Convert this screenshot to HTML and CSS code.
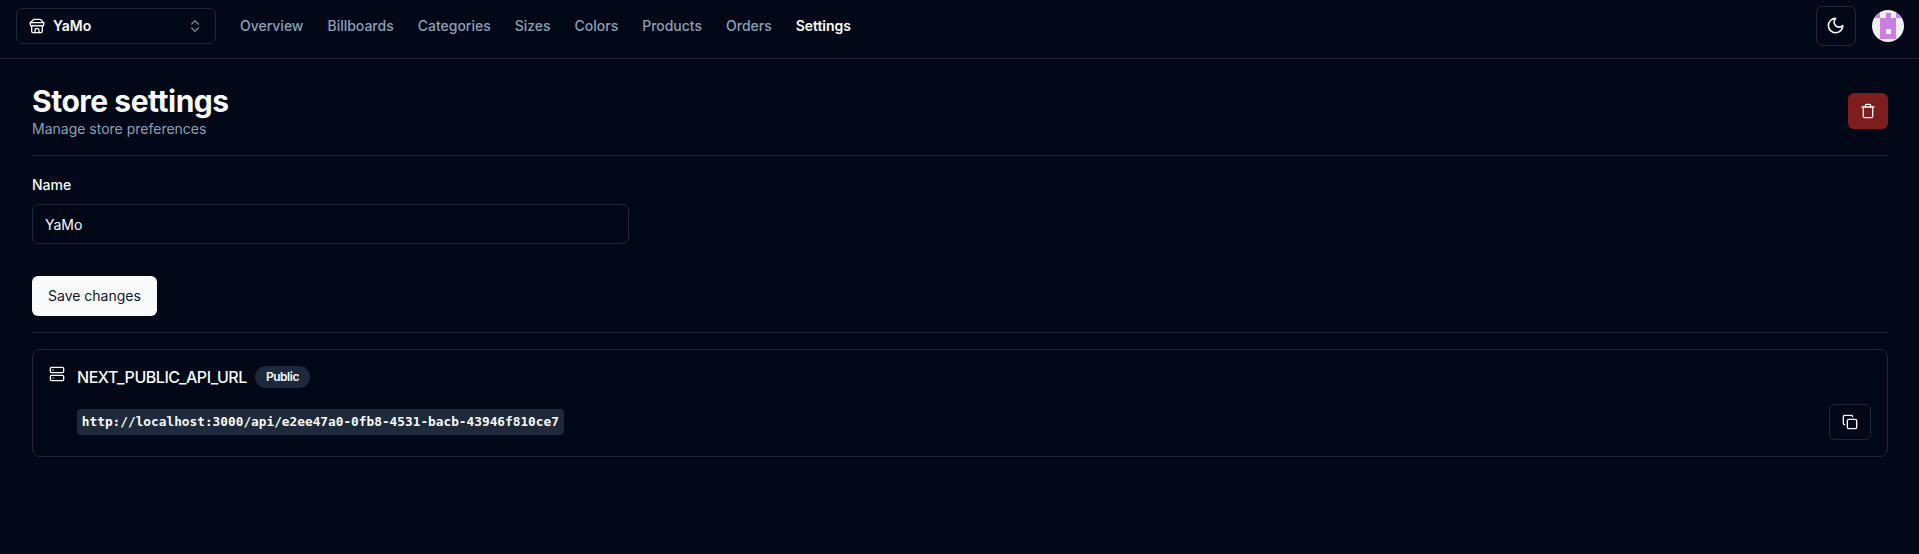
FILE: index.html
```html
<!DOCTYPE html>
<html lang="en">
<head>
<meta charset="utf-8">
<title>Store settings</title>
<link rel="stylesheet" href="styles.css">
</head>
<body>
<header class="topbar">
  <button class="switcher" type="button">
    <svg class="icon" viewBox="0 0 24 24"><path d="m2 7 4.41-4.41A2 2 0 0 1 7.83 2h8.34a2 2 0 0 1 1.42.59L22 7"/><path d="M4 12v8a2 2 0 0 0 2 2h12a2 2 0 0 0 2-2v-8"/><path d="M15 22v-4a2 2 0 0 0-2-2h-2a2 2 0 0 0-2 2v4"/><path d="M2 7h20"/><path d="M22 7v3a2 2 0 0 1-2 2a2.7 2.7 0 0 1-1.59-.63.7.7 0 0 0-.82 0A2.7 2.7 0 0 1 16 12a2.7 2.7 0 0 1-1.59-.63.7.7 0 0 0-.82 0A2.7 2.7 0 0 1 12 12a2.7 2.7 0 0 1-1.59-.63.7.7 0 0 0-.82 0A2.7 2.7 0 0 1 8 12a2.7 2.7 0 0 1-1.59-.63.7.7 0 0 0-.82 0A2.7 2.7 0 0 1 4 12a2 2 0 0 1-2-2V7"/></svg>
    <span class="switcher-name">YaMo</span>
    <svg class="icon chevrons" viewBox="0 0 24 24"><path d="m7 15 5 5 5-5"/><path d="m7 9 5-5 5 5"/></svg>
  </button>
  <nav class="nav">
    <a class="nav-link">Overview</a>
    <a class="nav-link">Billboards</a>
    <a class="nav-link">Categories</a>
    <a class="nav-link">Sizes</a>
    <a class="nav-link">Colors</a>
    <a class="nav-link">Products</a>
    <a class="nav-link">Orders</a>
    <a class="nav-link active">Settings</a>
  </nav>
  <div class="actions">
    <button class="theme-toggle" type="button" aria-label="Toggle theme">
      <svg class="icon moon" viewBox="0 0 24 24"><path d="M12 3a6 6 0 0 0 9 9 9 9 0 1 1-9-9Z"/></svg>
    </button>
    <svg class="avatar" viewBox="0 0 32 32" shape-rendering="crispEdges"><rect width="32" height="32" fill="#f0f0f0"/><path fill="#cb7fe0" d="M2 3h6v5H2zM24 3h6v5h-6zM14 3h5v5h-5zM8 8h16v21H8z"/><path fill="#f0f0f0" d="M14 19h5v5h-5z"/></svg>
  </div>
</header>
<main class="page">
  <div class="page-head">
    <div>
      <h1 class="title">Store settings</h1>
      <p class="subtitle">Manage store preferences</p>
    </div>
    <button class="delete" type="button" aria-label="Delete store">
      <svg class="icon" viewBox="0 0 24 24"><path d="M3 6h18"/><path d="M19 6v14c0 1-1 2-2 2H7c-1 0-2-1-2-2V6"/><path d="M8 6V4c0-1 1-2 2-2h4c1 0 2 1 2 2v2"/></svg>
    </button>
  </div>
  <div class="separator"></div>
  <form class="form">
    <div class="fields">
      <div class="field">
        <label class="label" for="name">Name</label>
        <input class="input" id="name" value="YaMo">
      </div>
    </div>
    <button class="save" type="button">Save changes</button>
  </form>
  <div class="separator"></div>
  <section class="alert">
    <svg class="icon" viewBox="0 0 24 24"><rect width="20" height="8" x="2" y="2" rx="2"/><rect width="20" height="8" x="2" y="14" rx="2"/><path d="M6 6h.01M6 18h.01"/></svg>
    <div class="alert-body">
      <h2 class="alert-title">NEXT_PUBLIC_API_URL<span class="badge">Public</span></h2>
      <div class="alert-row">
        <code class="code">http://localhost:3000/api/e2ee47a0-0fb8-4531-bacb-43946f810ce7</code>
        <button class="copy" type="button" aria-label="Copy">
          <svg class="icon" viewBox="0 0 24 24"><rect width="14" height="14" x="8" y="8" rx="2"/><path d="M4 16c-1.1 0-2-.9-2-2V4c0-1.1.9-2 2-2h10c1.1 0 2 .9 2 2"/></svg>
        </button>
      </div>
    </div>
  </section>
</main>
</body>
</html>
```
FILE: styles.css
```css
* { box-sizing: border-box; margin: 0; }
:root {
  --bg: #020817;
  --fg: #f8fafc;
  --border: #1e293b;
  --muted: #8aa0b8;
}
body {
  min-height: 100vh;
  background: var(--bg);
  color: var(--fg);
  font: 16px/24px Inter, "Liberation Sans", sans-serif;
}
button, input { font: inherit; color: inherit; background: var(--bg); border: 1px solid var(--border); border-radius: 6px; }
button { display: flex; align-items: center; justify-content: center; padding: 0; }
.icon {
  width: 16px; height: 16px; flex: none; display: block;
  fill: none; stroke: currentColor; stroke-width: 2;
  stroke-linecap: round; stroke-linejoin: round;
}
.topbar { display: flex; align-items: center; height: 59px; padding: 0 15px 6px 16px; border-bottom: 1px solid var(--border); }
.switcher { width: 200px; height: 36px; padding: 0 12px; gap: 8px; font-size: 14px; font-weight: 600; justify-content: flex-start; }
.chevrons { margin-left: auto; opacity: .5; }
.nav { display: flex; gap: 24px; margin-left: 24px; font-size: 14px; line-height: 20px; font-weight: 500; letter-spacing: -.01px; color: var(--muted); }
.nav-link.active { color: #fff; font-weight: 600; letter-spacing: -.05px; }
.actions { display: flex; align-items: center; gap: 16px; margin-left: auto; }
.theme-toggle { width: 40px; height: 40px; }
.moon { width: 19.2px; height: 19.2px; margin-right: 1.2px; }
.avatar { width: 32px; height: 32px; border-radius: 50%; }
.page { display: flex; flex-direction: column; gap: 16px; padding: 24px 31px 24px 32px; }
.page-head { display: flex; align-items: center; justify-content: space-between; }
.title { font-size: 30px; line-height: 36px; font-weight: 700; letter-spacing: -.48px; }
.subtitle { font-size: 14px; line-height: 20px; color: var(--muted); }
.delete { width: 40px; height: 36px; background: #7f1d1d; border: 0; }
.separator { height: 1px; background: var(--border); }
.form { display: grid; gap: 32px; }
.fields { display: grid; grid-template-columns: repeat(3, 1fr); gap: 32px; }
.field { display: grid; gap: 8px; }
.label { height: 24px; padding-top: 1px; font-size: 14px; font-weight: 500; }
.input { width: 100%; height: 40px; padding: 8px 12px; font-size: 14px; }
.save { justify-self: start; height: 40px; padding: 0 16px; border: 0; background: var(--fg); color: #0f172a; font-size: 14px; }
.alert { display: flex; gap: 12px; height: 108px; padding: 16px; border: 1px solid var(--border); border-radius: 8px; }
.alert-body { flex: 1; }
.alert-title { display: flex; align-items: center; gap: 8px; height: 22px; font-size: 16px; font-weight: 500; letter-spacing: -.45px; }
.badge { height: 22px; padding: 0 11px; border-radius: 11px; background: var(--border); font-size: 12px; line-height: 22px; font-weight: 600; }
.alert-row { display: flex; align-items: center; justify-content: space-between; margin-top: 16px; }
.code { padding: 0 4.8px; height: 26px; border-radius: 4px; background: var(--border); font: 700 12.79px/26px "DejaVu Sans Mono", monospace; }
.copy { width: 42px; height: 36px; }
```
